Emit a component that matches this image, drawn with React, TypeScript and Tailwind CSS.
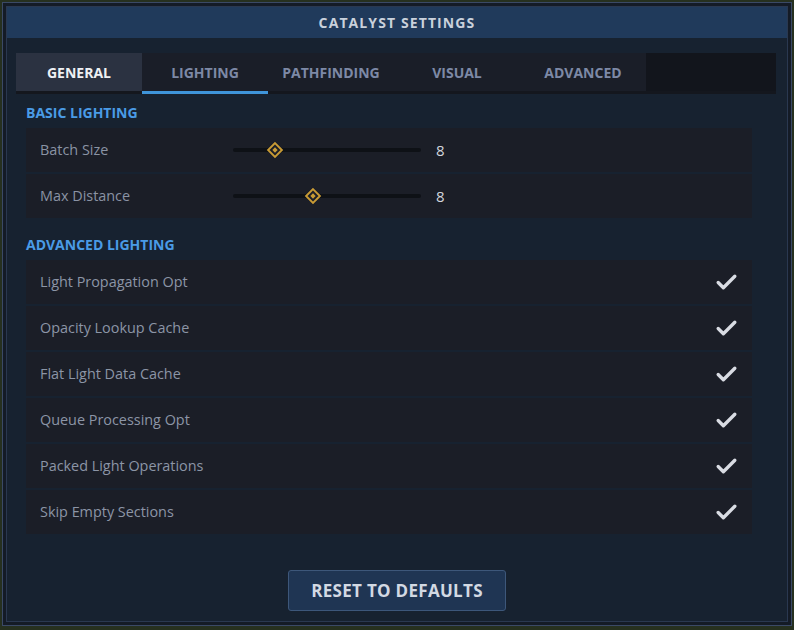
import { Check } from "lucide-react";

const tabs = ["GENERAL", "LIGHTING", "PATHFINDING", "VISUAL", "ADVANCED"];

const sliders = [
  { label: "Batch Size", value: 8, pos: 42 },
  { label: "Max Distance", value: 8, pos: 80 },
];

const toggles = [
  "Light Propagation Opt",
  "Opacity Lookup Cache",
  "Flat Light Data Cache",
  "Queue Processing Opt",
  "Packed Light Operations",
  "Skip Empty Sections",
];

function Thumb() {
  return (
    <svg width="17" height="17" viewBox="0 0 16 16" className="absolute top-1/2 -translate-x-1/2 -translate-y-1/2">
      <path d="M8 1.5 L14.5 8 L8 14.5 L1.5 8 Z" fill="#1b1e27" stroke="#c99b35" strokeWidth="1.8" />
      <path d="M8 5.5 L10.5 8 L8 10.5 L5.5 8 Z" fill="#c99b35" />
    </svg>
  );
}

function SectionTitle({ children }: { children: string }) {
  return (
    <div className="flex h-[32px] items-center px-[19px] text-[14px] font-bold text-[#4a9be6]">
      {children}
    </div>
  );
}

export default function App() {
  return (
    <div
      className="h-[630px] w-[794px] bg-[#26301f] p-[2px] pb-[4px]"
      style={{ fontFamily: "'Open Sans', 'Noto Sans', sans-serif" }}
    >
      <div className="h-full w-full border border-[#3a4966] bg-[#141b26] p-[3px]">
        <div className="flex h-full flex-col border border-[#2a3850] bg-[#172230]">
          <div className="flex h-[31px] items-center justify-center bg-[#203a5b] text-[14px] font-bold tracking-[1.1px] text-[#c9d1dc]">
            CATALYST SETTINGS
          </div>

          <div className="ml-[9px] mr-[11px] mt-[15px] flex h-[41px] bg-[#1a1e28]">
            {tabs.map((t, i) => (
              <div
                key={t}
                className={`flex w-[126px] items-center justify-center text-[14px] font-bold ${
                  i === 0 ? "bg-[#2b3241] text-[#eef0f4]" : "text-[#7d89a6]"
                } ${i === 1 ? "border-b-[3px] border-[#3f95da]" : "border-b-[3px] border-[#14171e]"}`}
              >
                {t}
              </div>
            ))}
            <div className="flex-1 border-b-[3px] border-[#14171e] bg-[#12151c]" />
          </div>

          <div className="pt-[2px]">
            <SectionTitle>BASIC LIGHTING</SectionTitle>
            <div className="ml-[19px] flex w-[726px] flex-col gap-[2px]">
              {sliders.map((s) => (
                <div key={s.label} className="flex h-[44px] items-center bg-[#1b1e27] pl-[14px]">
                  <div className="w-[193px] text-[14.4px] text-[#8a93a4]">{s.label}</div>
                  <div className="relative h-[4px] w-[188px] rounded-full bg-[#0e1116]">
                    <div className="absolute top-1/2" style={{ left: `${s.pos}px` }}>
                      <Thumb />
                    </div>
                  </div>
                  <div className="ml-[15px] text-[15px] text-[#d3d7de]">{s.value}</div>
                </div>
              ))}
            </div>

            <div className="mt-[10px]">
              <SectionTitle>ADVANCED LIGHTING</SectionTitle>
            </div>
            <div className="ml-[19px] flex w-[726px] flex-col gap-[2px]">
              {toggles.map((t) => (
                <div key={t} className="flex h-[44px] items-center justify-between bg-[#1b1e27] pl-[14px] pr-[13px]">
                  <span className="text-[14.4px] text-[#8c95a6]">{t}</span>
                  <Check size={25} strokeWidth={3.2} className="text-[#d9dce3]" />
                </div>
              ))}
            </div>
          </div>

          <div className="mt-[36px] flex justify-center">
            <button className="flex h-[41px] w-[218px] items-center justify-center rounded-[3px] border border-[#3d577a] bg-[#1f3553] text-[17px] font-bold tracking-[0.3px] text-[#d2d9e3]">
              RESET TO DEFAULTS
            </button>
          </div>
        </div>
      </div>
    </div>
  );
}
